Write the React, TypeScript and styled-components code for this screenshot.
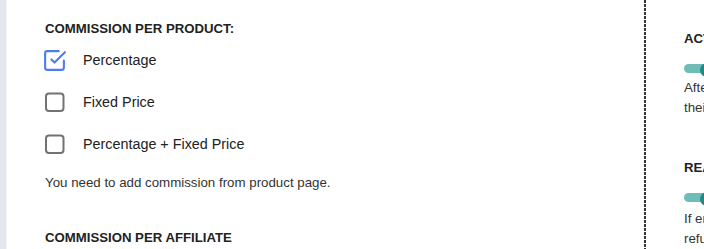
import React from "react";
import styled, { createGlobalStyle } from "styled-components";

const Global = createGlobalStyle`
  html, body { margin: 0; padding: 0; background: #fff; overflow: hidden; }
  body { font-family: "Liberation Sans", Arial, sans-serif; color: #222; }
`;

const Page = styled.div`
  display: flex;
  width: 704px;
  height: 249px;
  overflow: hidden;
`;

const SideStrip = styled.div`
  width: 6px;
  flex: none;
  background: #e3e7ed;
  border-right: 1px solid #eef1f5;
`;

const Column = styled.div<{ $width?: number }>`
  flex: ${(p) => (p.$width ? "none" : "1")};
  width: ${(p) => (p.$width ? `${p.$width}px` : "auto")};
  display: flex;
  flex-direction: column;
  padding-left: 38px;
  box-sizing: border-box;
  min-width: 0;
  white-space: nowrap;
`;

const Divider = styled.div`
  width: 2px;
  flex: none;
  background: repeating-linear-gradient(to bottom, #333 0 3px, transparent 3px 4px);
`;

const Heading = styled.div<{ $top: number }>`
  margin-top: ${(p) => p.$top}px;
  font-size: 13.2px;
  line-height: 16px;
  font-weight: 700;
  text-transform: uppercase;
  color: #222;
`;

const Options = styled.div`
  display: flex;
  flex-direction: column;
  gap: 22px;
  margin-top: 13px;
`;

const Option = styled.label`
  display: flex;
  align-items: center;
  gap: 18px;
  height: 20px;
  font-size: 14.35px;
  color: #222;
`;

const Box = styled.span<{ $checked: boolean }>`
  width: 20px;
  height: 20px;
  display: inline-flex;
  flex: none;
  position: relative;
  color: #4d7cf0;
  svg {
    position: absolute;
    left: ${(p) => (p.$checked ? "-3px" : "0")};
    top: ${(p) => (p.$checked ? "-2px" : "0")};
  }
`;

const Note = styled.div<{ $top: number }>`
  margin-top: ${(p) => p.$top}px;
  font-size: 13.3px;
  line-height: 18px;
  color: #333;
`;

const Toggle = styled.span<{ $top: number }>`
  position: relative;
  display: block;
  margin-top: ${(p) => p.$top}px;
  width: 34px;
  height: 12px;
  border-radius: 6px;
  background: #6fbdb7;
  &::after {
    content: "";
    position: absolute;
    left: 16px;
    top: -1px;
    width: 14px;
    height: 14px;
    border-radius: 50%;
    background: #1f8a82;
  }
`;

const Para = styled.div<{ $top: number }>`
  margin-top: ${(p) => p.$top}px;
  font-size: 13.3px;
  line-height: 20px;
  color: #333;
`;

const Checked = () => (
  <svg width="25" height="25" viewBox="0 0 24 24" fill="none" stroke="currentColor" strokeWidth="2" strokeLinecap="round" strokeLinejoin="round">
    <polyline points="9 11 12 14 22 4" />
    <path d="M21 12v7a2 2 0 0 1-2 2H5a2 2 0 0 1-2-2V5a2 2 0 0 1 2-2h11" />
  </svg>
);

const Unchecked = () => (
  <svg width="20" height="20" viewBox="0 0 20 20" fill="none" stroke="#727272" strokeWidth="2">
    <rect x="1" y="1.5" width="17.5" height="17.5" rx="3" />
  </svg>
);

const options = [
  { label: "Percentage", checked: true },
  { label: "Fixed Price", checked: false },
  { label: "Percentage + Fixed Price", checked: false },
];

export default function App() {
  return (
    <Page>
      <Global />
      <SideStrip />
      <Column $width={637}>
        <Heading $top={21}>Commission per product:</Heading>
        <Options>
          {options.map((o) => (
            <Option key={o.label}>
              <Box $checked={o.checked}>{o.checked ? <Checked /> : <Unchecked />}</Box>
              {o.label}
            </Option>
          ))}
        </Options>
        <Note $top={20}>You need to add commission from product page.</Note>
        <Heading $top={38}>Commission per affiliate</Heading>
      </Column>
      <Divider />
      <Column>
        <Heading $top={31}>Activate affiliate automatically</Heading>
        <Toggle $top={17} />
        <Para $top={5}>After registration, affiliates will be activated</Para>
        <Para $top={0}>their accounts without admin approval.</Para>
        <Heading $top={42}>Reactivate commission on refund</Heading>
        <Toggle $top={17} />
        <Para $top={7}>If enabled, the commission will be reverted</Para>
        <Para $top={0}>refunded orders automatically.</Para>
      </Column>
    </Page>
  );
}
